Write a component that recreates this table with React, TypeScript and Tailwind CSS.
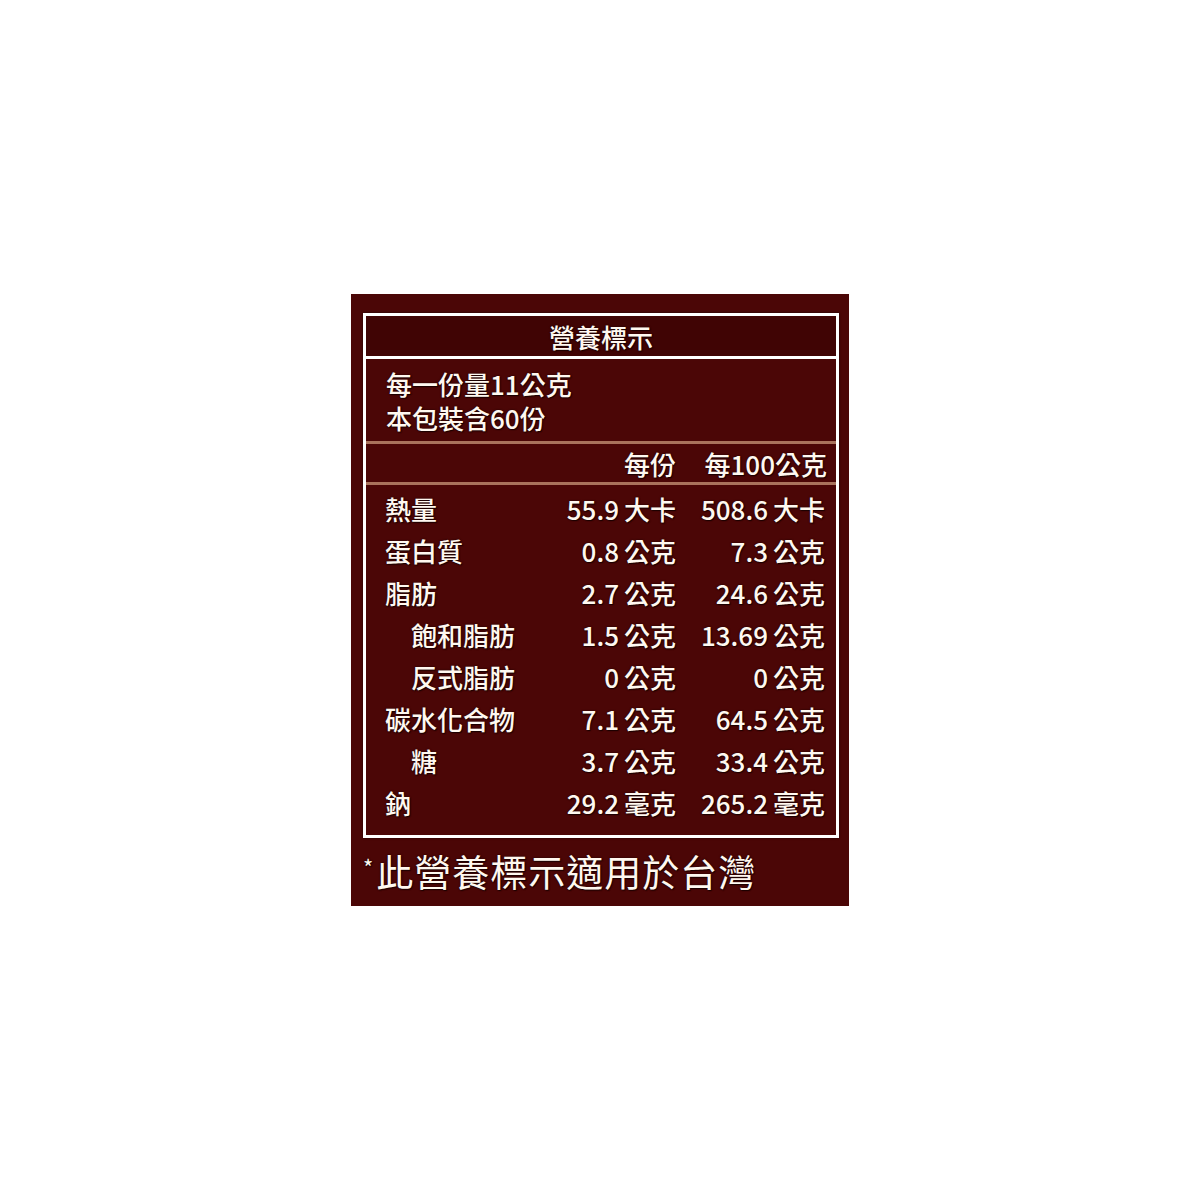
import React from 'react';

interface Row {
  label: string;
  indent?: boolean;
  per: string;
  per100: string;
  unit: string;
}

const rows: Row[] = [
  { label: '熱量', per: '55.9', per100: '508.6', unit: '大卡' },
  { label: '蛋白質', per: '0.8', per100: '7.3', unit: '公克' },
  { label: '脂肪', per: '2.7', per100: '24.6', unit: '公克' },
  { label: '飽和脂肪', indent: true, per: '1.5', per100: '13.69', unit: '公克' },
  { label: '反式脂肪', indent: true, per: '0', per100: '0', unit: '公克' },
  { label: '碳水化合物', per: '7.1', per100: '64.5', unit: '公克' },
  { label: '糖', indent: true, per: '3.7', per100: '33.4', unit: '公克' },
  { label: '鈉', per: '29.2', per100: '265.2', unit: '毫克' },
];

const font = "font-['Noto_Sans_CJK_TC','Noto_Sans',sans-serif]";
const shadow = '[text-shadow:1px_1px_1px_#1a0000,0_0_2px_#1a0000]';

const Cell = ({ value, unit, width }: { value: string; unit: string; width: string }) => (
  <div className={`flex justify-end items-center gap-[5px] ${width}`}>
    <span>{value}</span>
    <span className="w-[54px] text-left">{unit}</span>
  </div>
);

export default function App() {
  return (
    <div className={`min-h-[1200px] bg-white pt-[294px] pl-[351px] ${font}`}>
      <div className="w-[498px] h-[612px] bg-[#4b0606] pt-[19px] pl-[12px] text-[#fff8f0] font-medium">
        <div className="w-[476px] h-[525px] border-[3px] border-white shadow-[0_0_2px_#1a0000] flex flex-col">
          {/* 標題 */}
          <div className={`h-[43px] bg-[#400404] border-b-[3px] border-white flex items-center justify-center text-[26px] ${shadow}`}>
            營養標示
          </div>

          {/* 份量 */}
          <div className={`h-[82px] pl-[20px] pt-[8px] text-[26px] leading-[34px] ${shadow}`}>
            <p>每一份量11公克</p>
            <p>本包裝含60份</p>
          </div>
          <div className="h-[3px] bg-[#a9725c]" />

          {/* 表頭 */}
          <div className={`h-[38px] flex items-center justify-end pr-[9px] text-[26px] ${shadow}`}>
            <span className="w-[54px]">每份</span>
            <span className="w-[149px] text-right">每100公克</span>
          </div>
          <div className="h-[3px] bg-[#a9725c]" />

          {/* 營養素 */}
          <div className={`pt-[2px] pr-[9px] text-[26px] ${shadow}`}>
            {rows.map((r) => (
              <div key={r.label} className="h-[42px] flex items-center">
                <div className={`flex-1 ${r.indent ? 'pl-[45px]' : 'pl-[19px]'}`}>{r.label}</div>
                <Cell value={r.per} unit={r.unit} width="w-[147px]" />
                <Cell value={r.per100} unit={r.unit} width="w-[149px]" />
              </div>
            ))}
          </div>
        </div>

        {/* 註記 */}
        <div className={`h-[68px] flex items-center text-[37px] tracking-[1px] font-normal ${shadow}`}>
          <span className="text-[22px] self-start mt-[12px] mr-[2px]">*</span>
          <span>此營養標示適用於台灣</span>
        </div>
      </div>
    </div>
  );
}
